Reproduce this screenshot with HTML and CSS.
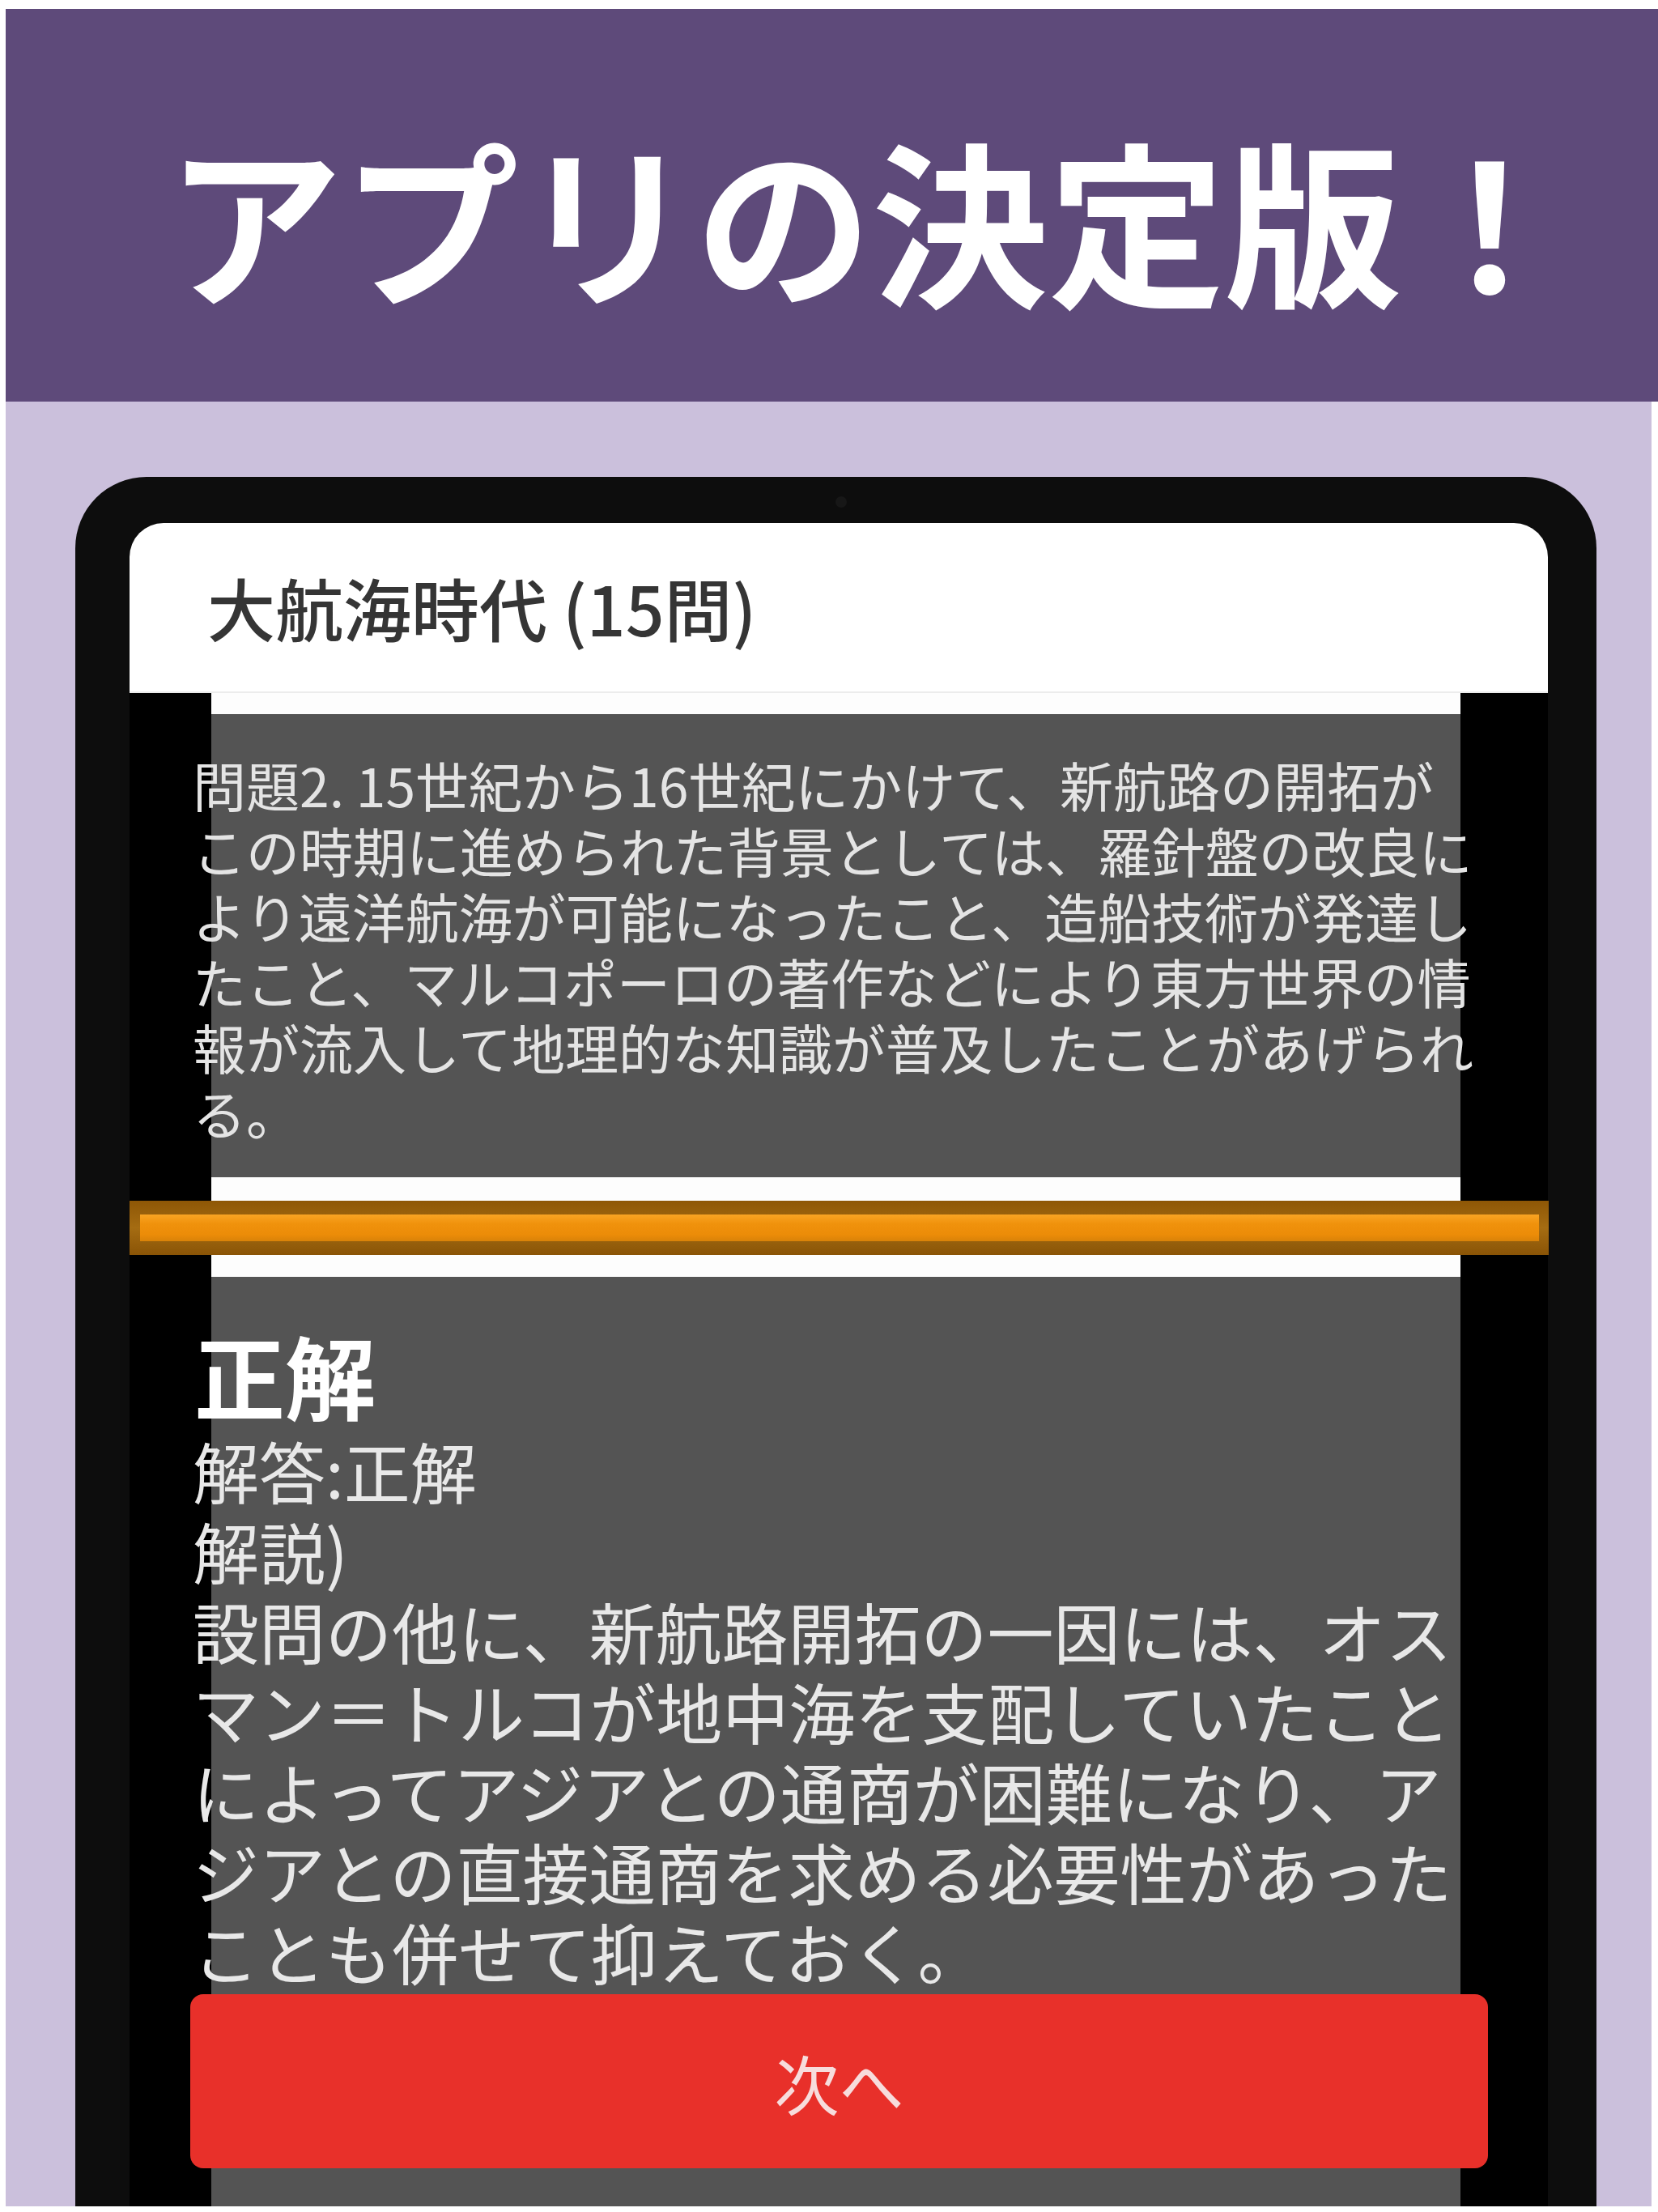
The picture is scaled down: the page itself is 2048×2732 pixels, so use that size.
FILE: index.html
```html
<!DOCTYPE html>
<html lang="ja">
<head>
<meta charset="utf-8">
<title>大航海時代</title>
<link rel="stylesheet" href="styles.css">
</head>
<body>
<div class="page">
  <header class="banner">
    <h1 class="banner-title">アプリの決定版！</h1>
  </header>
  <div class="stage">
    <div class="tablet">
      <span class="camera"></span>
      <div class="screen">
        <div class="app-bar">
          <h2 class="app-title">大航海時代 (15問)</h2>
        </div>
        <div class="app-body">
          <div class="column">
            <div class="gap-white top-gap"></div>
            <section class="question">
              <p class="question-text">問題2. 15世紀から16世紀にかけて、新航路の開拓がこの時期に進められた背景としては、羅針盤の改良により遠洋航海が可能になったこと、造船技術が発達したこと、マルコポーロの著作などにより東方世界の情報が流入して地理的な知識が普及したことがあげられる。</p>
            </section>
            <div class="divider">
              <div class="gap-white gap-a"></div>
              <div class="bar"><div class="bar-inner"></div></div>
              <div class="gap-white gap-b"></div>
            </div>
            <section class="answer">
              <h3 class="verdict">正解</h3>
              <div class="explain">
                <p>解答:正解</p>
                <p>解説)</p>
                <p class="explain-body">設問の他に、新航路開拓の一因には、オスマン＝トルコが地中海を支配していたことによってアジアとの通商が困難になり、アジアとの直接通商を求める必要性があったことも併せて抑えておく。</p>
              </div>
              <button class="next-btn" type="button">次へ</button>
            </section>
          </div>
        </div>
      </div>
    </div>
  </div>
</div>
</body>
</html>
```

FILE: styles.css
```css
* { box-sizing: border-box; }

html, body {
  margin: 0;
  padding: 0;
  background: #ffffff;
}

body {
  font-family: "Noto Sans CJK JP", "Noto Sans", sans-serif;
}

.page {
  margin: 11px 8px 0 7px;
  height: 2714px;
  background: #cbc0dc;
  display: flex;
  flex-direction: column;
}

.banner {
  height: 485px;
  margin-right: -8px;
  background: #5e4a7a;
  display: flex;
  align-items: center;
  padding: 29px 0 0 198px;
}

.banner-title {
  margin: 0;
  font-size: 218px;
  line-height: 1;
  font-weight: 700;
  color: #ffffff;
  white-space: nowrap;
}

.stage {
  flex: 1;
  display: flex;
  padding: 93px 0 0 86px;
  min-height: 0;
}

.tablet {
  position: relative;
  width: 1879px;
  height: 100%;
  background: #0d0d0d;
  border-radius: 88px 88px 0 0;
  padding: 57px 60px 0 67px;
  display: flex;
}

.camera {
  position: absolute;
  left: 939px;
  top: 24px;
  width: 14px;
  height: 14px;
  border-radius: 50%;
  background: #171717;
}

.screen {
  flex: 1;
  display: flex;
  flex-direction: column;
  min-width: 0;
}

.app-bar {
  height: 210px;
  background: #ffffff;
  border-radius: 42px 42px 0 0;
  border-bottom: 2px solid #ececec;
  display: flex;
  align-items: center;
  padding: 0 0 0 96px;
}

.app-title {
  margin: 0;
  font-size: 84px;
  line-height: 1;
  font-weight: 500;
  color: #353535;
}

.app-body {
  flex: 1;
  background: #000000;
  padding: 0 108px 0 101px;
  display: flex;
}

.column {
  flex: 1;
  display: flex;
  flex-direction: column;
  min-width: 0;
}

.gap-white {
  background: #fdfdfd;
}

.top-gap { height: 26px; }

.question {
  height: 572px;
  background: #545454;
  padding-top: 46px;
}

.question-text {
  margin: 0 0 0 -23px;
  width: 1588px;
  font-size: 66px;
  line-height: 81px;
  color: #e4e4e4;
  font-weight: 400;
}

.divider {
  display: flex;
  flex-direction: column;
}

.gap-a { height: 29px; }
.gap-b { height: 27px; }

.bar {
  height: 67px;
  margin: 0 -109px 0 -101px;
  background: linear-gradient(#8e5706, #a56c12 50%, #8a5406);
  padding: 17px 12px 17px 13px;
}

.bar-inner {
  height: 100%;
  background: linear-gradient(#f9a423, #f0920c 35%, #ec8c08 75%, #d98208);
}

.answer {
  flex: 1;
  background: #545454;
  padding-top: 55px;
  display: flex;
  flex-direction: column;
}

.verdict {
  margin: 0 0 0 -21px;
  font-size: 112px;
  line-height: 130px;
  font-weight: 700;
  color: #ffffff;
}

.explain {
  margin: 4px 0 0 -23px;
  width: 1572px;
  font-size: 82px;
  line-height: 99px;
  color: #e8e8e8;
}

.explain p {
  margin: 0;
}

.next-btn {
  margin: 4px -34px 0 -26px;
  height: 215px;
  border: none;
  border-radius: 16px;
  background: #e8302a;
  color: #f7dcdc;
  font-family: "Noto Sans CJK JP", "Noto Sans", sans-serif;
  font-size: 80px;
  font-weight: 400;
  line-height: 1;
  padding: 0;
}
```
